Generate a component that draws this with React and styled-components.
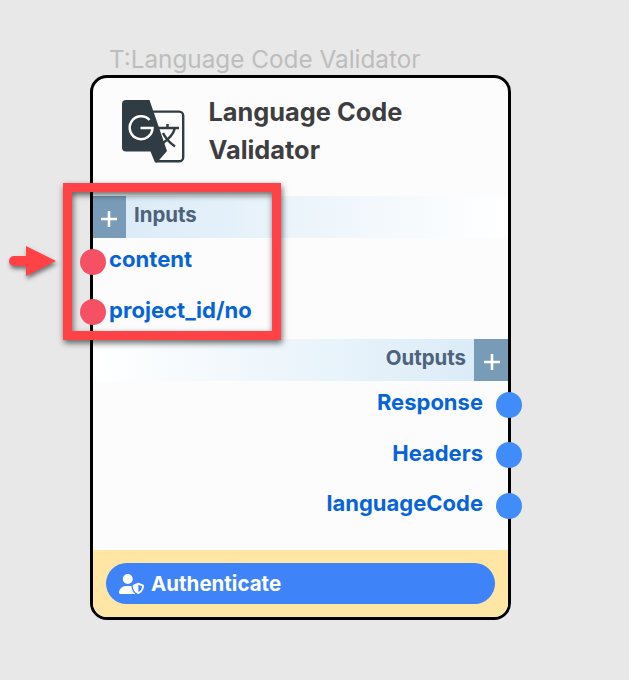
import React from "react";
import styled, { createGlobalStyle } from "styled-components";
import { FaUserShield } from "react-icons/fa6";

const GlobalStyle = createGlobalStyle`
  *, *::before, *::after { box-sizing: border-box; }
  body { margin: 0; background: #e8e8e8; font-family: Inter, "Liberation Sans", sans-serif; }
`;

const Canvas = styled.main`
  position: relative;
  width: 629px;
  height: 680px;
  padding: 45px 118px 0 90px;
  background: #e8e8e8;
  overflow: hidden;
`;

const NodeCaption = styled.div`
  height: 30px;
  padding-left: 19px;
  color: #bdbdbd;
  font-size: 24.3px;
  line-height: 29px;
  white-space: nowrap;
`;

const Card = styled.section`
  display: flex;
  flex-direction: column;
  width: 421px;
  height: 545px;
  border: 3px solid #000;
  border-radius: 17px;
  background: #fcfcfc;
`;

const CardHeader = styled.header`
  display: flex;
  height: 118px;
  padding: 15px 0 0 28px;
  gap: 22.5px;
`;

const TranslateIcon = styled.svg`
  display: block;
  flex: none;
  width: 65px;
  height: 76px;
`;

const Title = styled.h1`
  margin: 0;
  width: 230px;
  color: #3e3e40;
  font-size: 25.35px;
  font-weight: 700;
  line-height: 38px;
`;

const SectionBar = styled.div`
  display: flex;
  flex: none;
  flex-direction: ${({ $end }) => ($end ? "row-reverse" : "row")};
  gap: 8px;
  height: 42px;
  background: linear-gradient(${({ $end }) => ($end ? "270deg" : "90deg")}, #d8eaf7, #fff);
`;

const AddButton = styled.button`
  display: grid;
  place-items: center;
  width: ${({ $end }) => ($end ? "34px" : "33px")};
  height: 42px;
  padding: 4px ${({ $end }) => ($end ? "0 0 1px" : "1px 0 0")};
  border: 0;
  background: #789cb8;
`;

const SectionName = styled.span`
  color: #4c627d;
  font-size: 20.4px;
  font-weight: 700;
  line-height: 38px;
`;

const Ports = styled.ul`
  display: flex;
  flex-direction: column;
  flex: none;
  height: ${({ $end }) => ($end ? "169px" : "101px")};
  margin: 0;
  padding: 0;
  list-style: none;
`;

const Port = styled.li`
  display: flex;
  flex: none;
  flex-direction: ${({ $end }) => ($end ? "row-reverse" : "row")};
  align-items: center;
  gap: ${({ $end }) => ($end ? "13px" : "3px")};
  height: 50.5px;
  margin: 0 ${({ $end }) => ($end ? "-14px" : "-13px")};

  &:first-child { margin-top: ${({ $end }) => ($end ? "-1.5px" : "-1.75px")}; }
`;

const Dot = styled.i`
  flex: none;
  width: 26px;
  height: 26px;
  border-radius: 50%;
  background: ${({ $end }) => ($end ? "#3f8cfa" : "#f55064")};
`;

const PortName = styled.span`
  padding-bottom: ${({ $end }) => ($end ? "5.5px" : "4.5px")};
  color: #0664d8;
  font-size: ${({ $end }) => ($end ? "22px" : "22.1px")};
  font-weight: 700;
  line-height: 28px;
`;

const CardFooter = styled.footer`
  flex: 1;
  padding: 13px;
  border-radius: 0 0 14px 14px;
  background: #ffe6a5;
`;

const AuthButton = styled.button`
  display: flex;
  align-items: center;
  gap: 7px;
  width: 389px;
  height: 41px;
  padding: 0 13px;
  border: 0;
  border-radius: 21px;
  background: #3f83f8;
  color: #fff;
  font: 700 20.5px/38px Inter, "Liberation Sans", sans-serif;

  svg { width: 25px; height: 20px; margin-top: 1px; }
`;

const Highlight = styled.div`
  position: absolute;
  left: 63px;
  top: 183px;
  width: 218px;
  height: 157px;
  border: 9px solid #ff4245;
  filter: drop-shadow(1px 3px 3px rgba(0, 0, 0, 0.6));
  pointer-events: none;
`;

const Pointer = styled.svg`
  position: absolute;
  left: 8px;
  top: 244px;
  width: 50px;
  height: 36px;
  overflow: visible;
  filter: drop-shadow(1px 3px 2px rgba(0, 0, 0, 0.5));
`;

const Plus = () => (
  <svg width="18" height="18" viewBox="0 0 18 18" fill="none" stroke="#fff" strokeWidth="2.6">
    <path d="M9 1v16M1 9h16" />
  </svg>
);

function PortList({ names, end }) {
  return (
    <Ports $end={end}>
      {names.map((name) => (
        <Port key={name} $end={end}>
          <Dot $end={end} />
          <PortName $end={end}>{name}</PortName>
        </Port>
      ))}
    </Ports>
  );
}

export default function App() {
  return (
    <>
      <GlobalStyle />
      <Canvas>
        <NodeCaption>T:Language Code Validator</NodeCaption>
        <Card>
          <CardHeader>
            <TranslateIcon viewBox="0 0 65 76">
              <path d="M29 18.600h29.200a4 4 0 0 1 4 4V64.200a4 4 0 0 1-4 4H35" fill="none" stroke="#303c43" strokeWidth="2.4" />
              <path d="M5 7h23.500L46 58l-10 11.400h-2l-4.500-11H5a4 4 0 0 1-4-4V11a4 4 0 0 1 4-4Z" fill="#303c43" />
              <path d="M28.500 27a11.400 11.400 0 1 0 3 8H19.500" fill="none" stroke="#fff" strokeWidth="2.5" />
              <path d="M37 35h21M46.500 31v4M54 35c-2 7-6 11-12 15M42 40c3 6 7 10 12 13.500" fill="none" stroke="#303c43" strokeWidth="2.5" />
            </TranslateIcon>
            <Title>Language Code Validator</Title>
          </CardHeader>
          <SectionBar>
            <AddButton aria-label="Add input"><Plus /></AddButton>
            <SectionName>Inputs</SectionName>
          </SectionBar>
          <PortList names={["content", "project_id/no"]} />
          <SectionBar $end>
            <AddButton $end aria-label="Add output"><Plus /></AddButton>
            <SectionName>Outputs</SectionName>
          </SectionBar>
          <PortList end names={["Response", "Headers", "languageCode"]} />
          <CardFooter>
            <AuthButton><FaUserShield /><span>Authenticate</span></AuthButton>
          </CardFooter>
        </Card>
        <Highlight />
        <Pointer viewBox="0 0 50 36">
          <path d="M6 12h12V2l30 15-30 15V22H6a5 5 0 0 1 0-10Z" fill="#ff4245" />
        </Pointer>
      </Canvas>
    </>
  );
}
